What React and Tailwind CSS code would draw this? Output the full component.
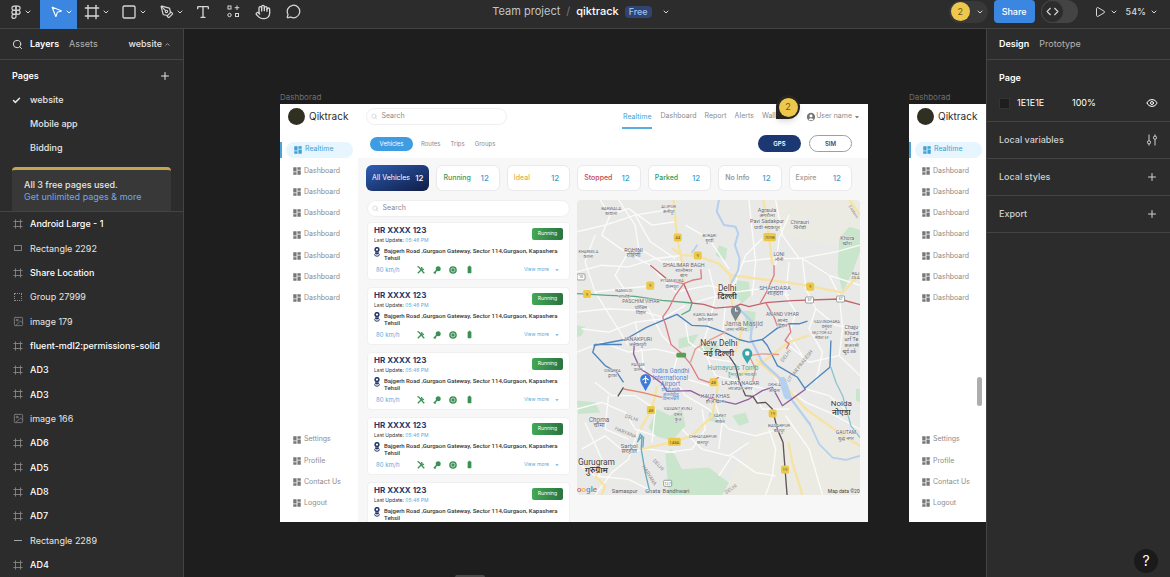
import {
  Check, ChevronDown, ChevronUp, Code, Eye, Figma, Frame, Hand, Image,
  MessageCircle, MousePointer2, PenTool, Play, Plus, Search, Square, Type,
} from 'lucide-react'
import { MdBatteryFull, MdDashboard, MdAccountCircle, MdArrowDropDown } from 'react-icons/md'

const PAGES = ['website', 'Mobile app', 'Bidding']

const LAYERS = [
  { type: 'frame', name: 'Android Large - 1' },
  { type: 'rect', name: 'Rectangle 2292' },
  { type: 'frame', name: 'Share Location' },
  { type: 'group', name: 'Group 27999' },
  { type: 'image', name: 'image 179' },
  { type: 'frame', name: 'fluent-mdl2:permissions-solid' },
  { type: 'frame', name: 'AD3' },
  { type: 'frame', name: 'AD3' },
  { type: 'image', name: 'image 166' },
  { type: 'frame', name: 'AD6' },
  { type: 'frame', name: 'AD5' },
  { type: 'frame', name: 'AD8' },
  { type: 'frame', name: 'AD7' },
  { type: 'line', name: 'Rectangle 2289' },
  { type: 'frame', name: 'AD4' },
]

const STATS = [
  { label: 'Running', color: 'text-[#3b9a5f]' },
  { label: 'Ideal', color: 'text-[#e0b04a]' },
  { label: 'Stopped', color: 'text-[#c0474e]' },
  { label: 'Parked', color: 'text-[#2f9a55]' },
  { label: 'No Info', color: 'text-[#8e8e8e]' },
  { label: 'Expire', color: 'text-[#9a9a9a]' },
]

const ROADS = [
  'M75 15L105 60L80 120L150 170L225 210L300 290', 'M6 110L90 90L180 60L300 40', 'M130 15L180 90L190 160L260 200L320 200',
  'M6 230L80 210L160 215L240 190L330 180', 'M60 120L30 200L60 290L110 370L160 450', 'M180 60L225 140L300 190',
  'M105 60L160 40L230 90L300 80', 'M160 170L120 240L160 300L220 340L260 420', 'M330 90L400 130L460 220',
  'M520 15L530 110L540 200L530 300', 'M600 15L620 120L670 190L780 170L852 150', 'M500 200L580 190L680 190L760 240L852 270',
  'M560 130L510 180L480 260L430 300L350 323', 'M640 60L610 130L600 210', 'M680 190L690 280L720 340L780 390L852 400',
  'M20 400L100 410L180 380L260 370L330 330', 'M6 470L80 440L160 470L240 460L330 480', 'M6 350L100 340L190 345L262 365',
  'M330 380L340 440L410 490L480 500', 'M260 420L310 470L290 540L330 600', 'M60 560L110 600L180 600L240 640L230 740',
  'M6 640L80 620L150 650L180 700L240 720', 'M20 760L90 720L150 770L220 760L300 770', 'M60 897L110 830L160 790L190 700',
  'M6 800L60 840L160 850L240 890', 'M330 600L400 640L460 700L540 720L610 700', 'M320 700L380 760L460 780L520 740',
  'M430 840L470 780L540 830L600 840', 'M380 640L390 700L350 760L270 770', 'M560 500L610 560L690 620L760 650L852 700',
  'M640 450L700 500L790 480L852 540', 'M690 580L760 600L820 650', 'M720 340L700 400L740 470L720 560',
  'M580 700L600 760L590 840L570 897', 'M630 660L700 760L740 897', 'M660 350L640 420L680 480', 'M400 392L380 450L420 540L500 560',
  'M300 290L400 270L480 290L560 280L640 300', 'M450 330L440 420L470 470', 'M520 560L560 640L640 640', 'M30 680L80 790L70 850',
  'M100 600L90 700L160 730', 'M400 220L420 300L400 390', 'M640 200L630 300L660 350', 'M300 540L400 570L480 560L570 580',
  'M410 600L440 680L430 760', 'M60 290L140 280L225 272', 'M180 380L200 470L210 560', 'M760 240L790 300L800 400L790 480',
]

const HIGHWAYS = [
  'M295 15L305 130L320 200L325 262', 'M290 160L320 180L366 182L430 205L465 240L640 262L705 273L800 292L852 235',
  'M563 15L580 125L590 210', 'M465 240L470 330L500 400L480 470', 'M245 572L230 640L195 700', 'M430 560L410 660L350 720L298 737L200 760',
  'M540 490L620 560L690 640L760 690L800 720L852 750', 'M638 740L650 800L680 897', 'M820 15L852 60', 'M60 840L90 870L80 897',
  'M700 420L640 440L560 500L490 540',
]

const PARKS = [
  'M790 130L820 95L852 105V170L830 230L800 290L785 230Z', 'M485 255L520 260L525 300L500 325L480 300Z',
  'M430 150L455 160L450 195L420 180Z', 'M310 430L370 415L350 450L310 460Z', 'M6 615L60 620L75 650L10 655Z',
  'M245 640L285 660L320 640L330 690L290 735L240 720L220 695Z', 'M270 770L290 760L320 820L400 815L460 860L440 897H280Z',
  'M470 660L510 650L520 680L490 690Z', 'M400 650L450 655L445 680L400 675Z', 'M505 345L540 350L535 400L515 410Z',
  'M6 390L30 395L20 420L6 425Z', 'M370 445L430 450L420 475L375 470Z', 'M840 580L852 580V620L840 615Z',
]

const LINES = [
  { color: '#5aa886', d: 'M6 295L100 300L180 303L260 315L350 323L343 345L318 358' },
  { color: '#4f86bd', d: 'M55 450L150 432L215 395L305 357L350 390L395 392L445 410L490 432L520 440L560 432L605 398L640 385L670 385L695 377' },
  { color: '#4f86bd', d: 'M140 447H60L53 470L90 510L125 530L145 560' },
  { color: '#4f86bd', d: 'M560 432L575 450L605 510L665 545L687 578L762 515L765 435' },
  { color: '#c4626b', d: 'M225 210L273 250M325 265L350 323L385 327L420 338L480 333L495 326L520 334L570 322L650 316L790 311L852 328' },
  { color: '#dc7d84', d: 'M595 210V240L570 295L553 325M570 322L595 365L605 392M640 385L645 410L628 435L640 445L632 460' },
  { color: '#dc7d84', d: 'M270 253L325 265L350 255L378 250L376 222M325 265L300 300L280 340L262 365L270 385L287 447L320 475L345 505L370 550L400 560L430 545' },
  { color: '#e39a8c', d: 'M345 500L360 460L400 435L450 410M530 560L540 520L520 480L560 475L610 477' },
  { color: '#e2896a', d: 'M145 580L200 590L260 605' },
  { color: '#95609f', d: 'M178 440L175 475L195 520L235 545L262 565L275 587L345 585L375 600L420 612L480 625L520 610L560 585L590 575L620 630L655 605L690 580' },
  { color: '#5e5358', d: 'M145 575L128 602M460 480L480 510L492 560L510 600L532 602L545 622L570 620L590 640L605 700L622 740L628 820L634 897' },
  { color: '#64abc4', d: 'M222 880L210 830L198 760L200 720L187 738L195 715L205 725L203 755' },
  { color: '#8cc4cf', d: 'M765 515L780 560L800 600L825 690L852 725' },
]

const PLACES = [
  { x: 108, y: 44, size: 13, name: 'BARWALA', hi: 'बरवाला' },
  { x: 280, y: 38, size: 13, name: 'ALIPUR', hi: 'अलीपुर' },
  { x: 574, y: 50, size: 16, name: 'Agraula', hi: 'अगरौला' },
  { x: 574, y: 85, size: 16, name: 'Pavi Sadakpur', hi: 'पावी सदकपुर' },
  { x: 672, y: 87, size: 16, name: 'Chirauri', hi: 'चिरोड़ी' },
  { x: 402, y: 125, size: 12, name: 'BURARI', hi: 'बुराड़ी' },
  { x: 175, y: 170, size: 17, name: 'ROHINI', hi: 'रोहिणी' },
  { x: 40, y: 173, size: 12, name: 'KHARMILA', hi: 'कराला' },
  { x: 814, y: 134, size: 16, name: 'Khora', hi: 'खोरा' },
  { x: 610, y: 181, size: 15, name: 'LONI', hi: 'लोनी' },
  { x: 325, y: 214, size: 16, name: 'SHALIMAR BAGH', hi: 'शालीमार', hi2: 'बाग' },
  { x: 290, y: 261, size: 12, name: 'PITAM PURA', hi: 'पीतमपुरा' },
  { x: 598, y: 283, size: 18, name: 'SHAHDARA', hi: 'शाहदरा' },
  { x: 146, y: 291, size: 12, name: 'NANGLOI', hi: 'नांगलोई' },
  { x: 197, y: 324, size: 15, name: 'PASCHIM VIHAR', hi: 'पश्चिम', hi2: 'विहार' },
  { x: 390, y: 362, size: 12, name: 'KAROL BAGH', hi: 'करोल बाग' },
  { x: 620, y: 363, size: 15, name: 'ANAND VIHAR', hi: 'आनंद', hi2: 'विहार' },
  { x: 753, y: 382, size: 12, name: 'VASUNDHARA', hi: 'वसुंधरा' },
  { x: 738, y: 415, size: 12, name: 'SECTOR 62', hi: 'सेक्टर ६२' },
  { x: 187, y: 437, size: 16, name: 'JANAKPURI', hi: 'जनकपुरी' },
  { x: 188, y: 510, size: 12, name: 'PALAM', hi: 'पालम' },
  { x: 112, y: 528, size: 12, name: 'DWARKA', hi: 'द्वारका' },
  { x: 494, y: 568, size: 16, name: 'LAJPAT NAGAR', hi: 'लाजपत नगर' },
  { x: 596, y: 572, size: 12, name: 'OKHLA', hi: 'ओखला' },
  { x: 419, y: 607, size: 16, name: 'HAUZ KHAS', hi: 'हौज़ खास' },
  { x: 308, y: 644, size: 13, name: 'VASANT KUNJ', hi: 'वसंत', hi2: 'कुंज' },
  { x: 433, y: 665, size: 13, name: 'SAKET', hi: 'साकेत' },
  { x: 610, y: 694, size: 13, name: 'BADARPUR', hi: 'बदरपुर' },
  { x: 72, y: 678, size: 19, name: 'Choma', hi: 'चौमा' },
  { x: 382, y: 727, size: 13, name: 'CHHATARPUR', hi: 'छतरपुर' },
  { x: 162, y: 756, size: 18, name: 'Sarhol', hi: 'सरहौल' },
  { x: 810, y: 716, size: 15, name: 'GAUTAM', hi: 'बुद्ध नगर' },
]

const CITIES = [
  { x: 455, y: 287, size: 25, name: 'Delhi', hi: 'दिल्ली', hiY: 312 },
  { x: 430, y: 453, size: 25, name: 'New Delhi', hi: 'नई दिल्ली', hiY: 480 },
  { x: 796, y: 632, size: 24, name: 'Noida', hi: 'नोएडा', hiY: 658 },
  { x: 64, y: 806, size: 25, name: 'Gurugram', hi: 'गुरुग्राम', hiY: 832 },
]

const SHIELDS = [
  { x: 307, y: 127, n: '44' }, { x: 582, y: 126, n: '709B' }, { x: 367, y: 181, n: '9' }, { x: 225, y: 271, n: '9' },
  { x: 36, y: 296, n: '9' }, { x: 703, y: 274, n: '9' }, { x: 414, y: 560, n: '48' }, { x: 227, y: 643, n: '48' },
  { x: 297, y: 738, n: '148A' }, { x: 591, y: 653, n: '19' }, { x: 628, y: 821, n: '19' },
]

function DelhiMap() {
  return (
    <svg viewBox="6 15 846 882" className="block w-full rounded" role="img" aria-label="Map of Delhi" fontFamily="Roboto, 'Noto Sans', sans-serif">
      <rect x="6" y="15" width="846" height="882" fill="#e9e9e8" />
      <path d="M330 15H560L600 120L852 160V15Z M640 600L852 760V897H440L520 740Z" fill="#ecebe3" />
      {PARKS.map((d) => <path key={d} d={d} fill="#c9e5cb" />)}
      <g fill="none" stroke="#fbfbfb" strokeWidth="4" strokeLinejoin="round">
        {ROADS.map((d) => <path key={d} d={d} />)}
      </g>
      <g fill="none" stroke="#f6e3a4" strokeWidth="7" strokeLinejoin="round">
        {HIGHWAYS.map((d) => <path key={d} d={d} />)}
      </g>
      <g fill="none" stroke="#b5cfee" strokeLinejoin="round" strokeLinecap="round">
        <path strokeWidth="6" d="M430 15L424 50L445 90L480 95L488 115L478 150L492 190L488 225L468 262" />
        <path strokeWidth="5" d="M365 150L350 172M700 680L730 745L770 785L810 792L852 780" />
        <path strokeWidth="7" d="M495 345L530 380L525 430L560 500L610 545L650 615L702 685" />
        <path strokeWidth="22" d="M620 555L635 600" />
      </g>
      <g fill="none" strokeWidth="4" strokeLinejoin="round">
        {LINES.map((l) => <path key={l.d} d={l.d} stroke={l.color} />)}
      </g>

      {SHIELDS.map((s) => (
        <g key={`${s.x}-${s.y}`}>
          <rect x={s.x - (s.n.length > 2 ? 19 : 12)} y={s.y - 12} width={s.n.length > 2 ? 38 : 24} height="24" rx="5" fill="#ecc94b" />
          <text x={s.x} y={s.y + 5} fontSize="13" textAnchor="middle" fill="#6c5a1e">{s.n}</text>
        </g>
      ))}
      {[[701, 314, '57'], [794, 311, '57'], [18, 245, '10'], [277, 862, '127']].map(([x, y, n]) => (
        <g key={`${x}`}>
          <rect x={x - 12} y={y - 9} width="24" height="18" rx="3" fill="#fff" stroke="#777" strokeWidth="2" />
          <text x={x} y={y + 4} fontSize="11" textAnchor="middle" fill="#555">{n}</text>
        </g>
      ))}

      <g textAnchor="middle" fill="#62656d" stroke="#f2f2f2" strokeWidth="2" paintOrder="stroke">
        {PLACES.map((p) => (
          <g key={p.name} fontSize={p.size}>
            <text x={p.x} y={p.y}>{p.name}</text>
            <text x={p.x} y={p.y + 16}>{p.hi}</text>
            {p.hi2 && <text x={p.x} y={p.y + 31}>{p.hi2}</text>}
          </g>
        ))}
      </g>
      <g textAnchor="middle" fill="#3d3f44" stroke="#f2f2f2" strokeWidth="2" paintOrder="stroke">
        {CITIES.map((c) => (
          <g key={c.name} fontSize={c.size}>
            <text x={c.x} y={c.y}>{c.name}</text>
            <text x={c.x} y={c.hiY} fontWeight="600">{c.hi}</text>
          </g>
        ))}
      </g>

      <g fontSize="15" fill="#8f8f8f">
        <text transform="translate(148 665) rotate(18)">DELHI</text>
        <text transform="translate(118 702) rotate(22)">HARYANA</text>
        <text transform="translate(232 795) rotate(48)">DELHI</text>
        <text transform="translate(200 812) rotate(58)">HARYANA</text>
        <text transform="translate(622 500) rotate(-55)">DELHI</text>
        <text transform="translate(640 560) rotate(-52)">UTTAR PRADESH</text>
        <text transform="translate(452 895) rotate(-35)">DELHI</text>
        <text transform="translate(818 34) rotate(58)" fontSize="13">Eastern</text>
      </g>

      <g fontSize="20" fill="#7e8186">
        <text x="504" y="392" textAnchor="middle">Jama Masjid</text>
        <text x="482" y="407" fontSize="14" textAnchor="middle">जामा मस्जिद</text>
      </g>
      <path d="M480 378C472 360 466 356 466 346A15 15 0 0 1 496 346C496 356 488 360 480 378Z" fill="#7b8790" />
      <path d="M480 338V347H487" fill="none" stroke="#fff" strokeWidth="3" />
      <g fill="#4fa9a5" textAnchor="middle">
        <text x="472" y="524" fontSize="20">Humayun's Tomb</text>
        <text x="500" y="541" fontSize="14">हुमायूं का मकबरा</text>
      </g>
      <path d="M515 505C505 487 500 483 500 474A15 15 0 0 1 530 474C530 483 525 487 515 505Z" fill="#36a6a8" />
      <rect x="509" y="467" width="12" height="13" rx="3" fill="#fff" />
      <g fill="#5b86cf" fontSize="19" textAnchor="middle">
        <text x="286" y="533">Indira Gandhi</text>
        <text x="285" y="552">International</text>
        <text x="285" y="571">Airport</text>
        <g fontSize="14">
          <text x="286" y="586">इंदिरा गांधी</text>
          <text x="286" y="600">अंतर्राष्ट्रीय</text>
          <text x="286" y="614">विमानक्षेत्र</text>
        </g>
      </g>
      <path d="M211 586C201 568 195 562 195 551A16 16 0 0 1 227 551C227 562 221 568 211 586Z" fill="#3e7bd8" />
      <path d="M211 541V561M202 553L211 547L220 553M207 561H215" fill="none" stroke="#fff" strokeWidth="3" />
      <rect x="303" y="472" width="29" height="14" rx="4" fill="#5aa052" />

      <g fontSize="17" fill="#5e6168">
        <text x="110" y="891">Samaspur</text>
        <text x="210" y="891">Ghata</text>
        <text x="262" y="891">Bandhwari</text>
        <text x="828" y="238" fontSize="12">RAJ</text>
        <text x="826" y="252" fontSize="12">ZILA</text>
        <text x="806" y="400" fontSize="16">Chaju</text>
        <text x="806" y="418" fontSize="16">Khurd</text>
        <text x="806" y="436" fontSize="16">urf Te</text>
        <text x="806" y="454" fontSize="14">छजारसी</text>
        <text x="800" y="472" fontSize="14">खुर्द उर्फ</text>
      </g>
      <text x="6" y="889" fontSize="24" fontWeight="500">
        <tspan fill="#e06055">o</tspan><tspan fill="#e5b93a">o</tspan><tspan fill="#5a8ee0">g</tspan><tspan fill="#4fa662">l</tspan><tspan fill="#e06055">e</tspan>
      </text>
      <text x="756" y="891" fontSize="15" fill="#444">Map data ©20</text>
    </svg>
  )
}

function LayerIcon({ type }) {
  if (type === 'frame') return <Frame size={10} strokeWidth={2} className="text-[#8b8b8b]" />
  if (type === 'image') return <Image size={11} strokeWidth={2} className="text-[#7d7d7d]" />
  if (type === 'rect') return <span className="h-1.5 w-2 border border-[#7d7d7d]" />
  if (type === 'group') return <span className="h-2 w-2 border border-dotted border-[#8b8b8b]" />
  return <span className="h-px w-2 bg-[#a5a5a5]" />
}

function Tool({ label, active, menu, children }) {
  return (
    <button
      type="button"
      aria-label={label}
      className={`flex items-center gap-0.5 pb-1.5 ${menu ? 'w-[37px] justify-end pr-1' : 'w-[30px] justify-center'} ${active ? 'bg-[#3b86e0] text-white' : ''}`}
    >
      {children}
      {menu && <ChevronDown size={8} strokeWidth={3} />}
    </button>
  )
}

function Toolbar() {
  return (
    <header className="grid h-[29px] shrink-0 grid-cols-[1fr_auto_1fr] border-b border-[#444] bg-[#2c2c2c] text-[#d6d6d6]">
      <div className="flex">
        <button type="button" aria-label="Main menu" className="flex w-10 items-center justify-end gap-px pr-2 pb-1.5">
          <Figma size={14} />
          <ChevronDown size={8} strokeWidth={3} />
        </button>
        <Tool label="Move" active menu>
          <MousePointer2 size={13} strokeWidth={2} />
        </Tool>
        <Tool label="Frame" menu><Frame size={16} strokeWidth={2} /></Tool>
        <Tool label="Shape" menu><Square size={16} strokeWidth={2} /></Tool>
        <Tool label="Pen" menu><PenTool size={14} strokeWidth={2} /></Tool>
        <Tool label="Text"><Type size={16} strokeWidth={2} /></Tool>
        <Tool label="Resources">
          <svg width="13" height="13" viewBox="0 0 13 13" fill="none" stroke="currentColor">
            <rect x="1" y="1" width="3" height="3" />
            <path d="M10 0.5V5M7.7 2.7H12.3" />
            <circle cx="2.5" cy="10" r="1.7" />
            <rect x="8.5" y="8.5" width="3" height="3" />
          </svg>
        </Tool>
        <Tool label="Hand"><Hand size={16} strokeWidth={2} /></Tool>
        <Tool label="Comment"><MessageCircle size={15} strokeWidth={2} /></Tool>
      </div>

      <div className="mr-2 flex items-center gap-1.5 pb-1.5 text-[11px]">
        <span className="text-[#c4c4c4]">Team project</span>
        <span className="text-[#777]">/</span>
        <span className="font-medium text-white">qiktrack</span>
        <span className="rounded-sm bg-[#2f4470] px-1 text-[9px] leading-3 font-medium text-[#9cc0f5]">Free</span>
        <button type="button" aria-label="File menu" className="ml-1"><ChevronDown size={8} strokeWidth={3} /></button>
      </div>

      <div className="flex items-center justify-end pr-3 pb-1.5">
        <button type="button" aria-label="Collaborators" className="flex h-[22px] items-center gap-1.5 rounded-full bg-[#383838] pr-1 pl-0.5">
          <span className="flex size-[19px] items-center justify-center rounded-full bg-[#eec84d] text-[9px] text-[#6b5413]">2</span>
          <ChevronDown size={8} strokeWidth={3} />
        </button>
        <button type="button" className="ml-1.5 h-[23px] rounded bg-[#3b86e0] px-2 font-medium text-white">Share</button>
        <button type="button" aria-label="Dev mode" className="ml-1.5 flex h-[23px] w-[37px] items-center rounded-full bg-[#444]">
          <span className="flex size-[23px] items-center justify-center rounded-full border border-[#444] bg-[#2c2c2c]"><Code size={13} strokeWidth={2} /></span>
        </button>
        <button type="button" aria-label="Present" className="ml-4 flex items-center gap-1">
          <Play size={12} strokeWidth={2} />
          <ChevronDown size={8} strokeWidth={3} />
        </button>
        <button type="button" className="ml-2 flex items-center gap-1 font-medium">
          54% <ChevronDown size={8} strokeWidth={3} />
        </button>
      </div>
    </header>
  )
}

function LeftPanel() {
  return (
    <aside className="flex w-[184px] shrink-0 flex-col border-r border-[#444] bg-[#2c2c2c] text-[#e6e6e6]">
      <div className="flex h-[31px] shrink-0 items-center border-b border-[#444] px-3">
        <Search size={11} strokeWidth={2} />
        <button type="button" className="ml-[7px] font-semibold text-white">Layers</button>
        <button type="button" className="ml-2.5 text-[#b3b3b3]">Assets</button>
        <button type="button" className="ml-auto flex items-center gap-0.5 font-medium">
          website <ChevronUp size={7} />
        </button>
      </div>

      <div className="shrink-0 border-b border-[#444]">
        <div className="flex h-7 items-center justify-between px-3 pt-1">
          <h2 className="font-semibold text-white">Pages</h2>
          <button type="button" aria-label="Add page"><Plus size={12} strokeWidth={2} /></button>
        </div>
        <ul>
          {PAGES.map((p, i) => (
            <li key={p} className="flex h-6 items-center pl-3 font-medium">
              <span className="w-[18px]">{i === 0 && <Check size={9} strokeWidth={4} />}</span>
              {p}
            </li>
          ))}
        </ul>
        <div className="mx-3 mt-[7px] rounded-t-sm border-t-[3px] border-[#c9a44f] bg-[#383838] px-3 pt-[9px] pb-2 leading-3">
          <p className="font-medium">All 3 free pages used.</p>
          <a href="#plans" className="text-[#6fa8e4]">Get unlimited pages &amp; more</a>
        </div>
      </div>

      {/* layer tree */}
      <ul className="flex flex-1 flex-col">
        {LAYERS.map((l, i) => (
          <li key={i} className={`flex min-h-6 flex-1 items-center pl-3 ${l.type === 'frame' ? 'font-medium text-white' : ''}`}>
            <span className="mr-1.5 flex w-3 justify-center"><LayerIcon type={l.type} /></span>
            {l.name}
          </li>
        ))}
      </ul>
    </aside>
  )
}

function RightPanel() {
  return (
    <aside className="flex w-[184px] shrink-0 flex-col border-l border-[#444] bg-[#2c2c2c] text-[#d0d0d0]">
      <div className="flex h-[31px] items-center gap-2.5 border-b border-[#444] px-3">
        <button type="button" className="font-semibold text-white">Design</button>
        <button type="button" className="text-[#b3b3b3]">Prototype</button>
      </div>
      <section className="border-b border-[#444] px-3 pt-3 pb-[11px]">
        <h2 className="leading-3 font-semibold text-white">Page</h2>
        <div className="mt-3 flex h-3.5 items-center text-white">
          <span className="size-[11px] border border-[#333] bg-[#1e1e1e]" />
          <span className="ml-[7px] w-[55px]">1E1E1E</span>
          <span>100%</span>
          <button type="button" aria-label="Toggle visibility" className="ml-auto"><Eye size={12} strokeWidth={2} /></button>
        </div>
      </section>
      <section className="flex h-[37px] items-center justify-between border-b border-[#444] px-3 font-medium">
        <h2>Local variables</h2>
        <button type="button" aria-label="Open variables">
          <svg width="12" height="12" viewBox="0 0 12 12" fill="none" stroke="currentColor">
            <path d="M3 0.5V6.5M3 10V11.5M9 11.5V5.5M9 2V0.5" />
            <circle cx="3" cy="8.3" r="1.6" />
            <circle cx="9" cy="3.7" r="1.6" />
          </svg>
        </button>
      </section>
      {['Local styles', 'Export'].map((s) => (
        <section key={s} className="flex h-[37px] items-center justify-between border-b border-[#444] px-3 font-medium">
          <h2>{s}</h2>
          <button type="button" aria-label={`Add ${s}`}><Plus size={12} strokeWidth={2} /></button>
        </section>
      ))}
      <button type="button" aria-label="Help" className="mt-auto mr-3 mb-1 flex size-6 items-center justify-center self-end rounded-full bg-[#1a1a1a] text-sm text-white">?</button>
    </aside>
  )
}

function SideNav() {
  return (
    <nav className="flex w-[78px] shrink-0 flex-col bg-white pb-2 text-[7px] text-[#8c8c8c]">
      <div className="flex h-[25px] items-center gap-1 pl-2 text-[10px] text-[#2b2b2b]">
        <span className="size-[17px] rounded-full bg-[#2f2f22]" />
        Qiktrack
      </div>
      <ul className="mt-2.5 flex h-[170px] flex-col">
        <li className="flex flex-1 items-center text-[#3f9fd8]">
          <span className="h-4 w-0.5 bg-[#4ba3dc]" />
          <a href="#realtime" className="ml-1 flex h-4 w-[67px] items-center gap-0.5 rounded-full bg-[#e6f5fe] pl-[7px]">
            <MdDashboard size={10} /> Realtime
          </a>
        </li>
        {Array.from({ length: 7 }, (_, i) => (
          <li key={i} className="flex flex-1 items-center pl-3">
            <a href="#dashboard" className="flex items-center gap-0.5"><MdDashboard size={10} className="text-[#777]" /> Dashboard</a>
          </li>
        ))}
      </ul>
      <ul className="mt-auto flex h-[85px] flex-col">
        {['Settings', 'Profile', 'Contact Us', 'Logout'].map((s) => (
          <li key={s} className="flex flex-1 items-center pl-3">
            <a href="#more" className="flex items-center gap-0.5"><MdDashboard size={10} className="text-[#777]" /> {s}</a>
          </li>
        ))}
      </ul>
    </nav>
  )
}

function SearchBox({ id, className }) {
  return (
    <label htmlFor={id} className={`flex h-[17px] items-center gap-1 rounded-full border border-[#efefef] bg-white px-1 ${className}`}>
      <Search size={7} className="text-[#c4c4c4]" />
      <input id={id} type="search" placeholder="Search" aria-label="Search" className="w-full min-w-0 bg-transparent text-[7px] outline-none placeholder:text-[#8a8a8a]" />
    </label>
  )
}

function VehicleCard() {
  return (
    <article className="h-[58px] shrink-0 rounded border border-[#f0f0f0] bg-white px-1.5 pt-0.5 text-[#333]">
      <div className="flex items-start justify-between">
        <div>
          <h3 className="text-[8px] leading-[10px] font-bold text-[#24376b]">HR XXXX 123</h3>
          <p className="text-[5px] leading-[10px]">Last Update: <span className="text-[#58ace0]">05:46 PM</span></p>
        </div>
        <span className="mt-[3px] flex h-3 w-[31px] items-center justify-center rounded-xs bg-linear-to-r from-[#43a857] to-[#2a7440] text-[5px] text-white">Running</span>
      </div>
      <div className="mt-0.5 flex gap-1">
        <svg width="6" height="10" viewBox="0 0 6 10" className="shrink-0" fill="none" stroke="#24376b">
          <circle cx="3" cy="2.6" r="1.9" strokeWidth="1.5" />
          <path d="M1.6 5.2L3 7L4.4 5.2" strokeWidth="1.2" />
          <ellipse cx="3" cy="7.7" rx="2.3" ry="1.5" />
        </svg>
        <p className="font-[Roboto,sans-serif] text-[6px] leading-[7px] font-medium">Bajgerh Road ,Gurgaon Gateway, Sector 114,Gurgaon, Kapashera Tehsil</p>
      </div>
      <div className="mt-1 flex items-center text-[#3a9154]">
        <span className="w-[43px] pl-0.5 text-[6px] leading-2 text-[#58ace0]">80 km/h</span>
        <span className="flex items-center gap-2">
          <svg width="8" height="8" viewBox="0 0 8 8" fill="none" stroke="currentColor">
            <path d="M0.5 0.5L2 1.2L6 5.5M5 5L7.3 7.3" strokeWidth="1.3" />
            <path d="M0.8 7.2L4.8 3.3M4.7 1C4.4 2.6 5.4 3.6 7 3.3" strokeWidth="1.3" />
          </svg>
          <svg width="8" height="8" viewBox="0 0 8 8">
            <circle cx="5.2" cy="2.8" r="2.5" fill="currentColor" />
            <path d="M4 4L0.8 7.2M1.5 6.2L2.8 7.4" stroke="currentColor" strokeWidth="1.5" />
          </svg>
          <svg width="8" height="8" viewBox="0 0 8 8">
            <circle cx="4" cy="4" r="3.8" fill="currentColor" />
            <circle cx="4" cy="4" r="2" fill="none" stroke="#fff" strokeWidth="0.6" />
          </svg>
          <MdBatteryFull size={9} />
        </span>
        <button type="button" className="mr-0.5 ml-auto flex items-center gap-1 text-[5px] text-[#58ace0]">
          View more <MdArrowDropDown size={8} />
        </button>
      </div>
    </article>
  )
}

function DashboardHeader() {
  return (
    <header className="bg-white text-[7px] text-[#8c8c8c]">
      <div className="flex h-[25px] items-center pr-1.5 pl-2">
        <SearchBox id="search-top" className="w-[141px]" />
        <nav className="ml-auto flex items-center gap-2">
          <a href="#realtime" className="border-b-2 border-[#5aaede] px-px pt-2 pb-[6px] leading-2 text-[#3f9fd8]">Realtime</a>
          <a href="#dashboard">Dashboard</a>
          <a href="#report">Report</a>
          <a href="#alerts">Alerts</a>
          <a href="#wallet">Wallet</a>
        </nav>
        <button type="button" className="ml-6 flex items-center">
          <MdAccountCircle size={10} className="text-[#777]" />
          <span>User name</span>
          <MdArrowDropDown size={10} className="text-[#666]" />
        </button>
      </div>
      <div className="flex h-[29px] items-center pr-4 pl-3 text-[6px]">
        <div className="flex items-center gap-2">
          <button type="button" className="h-3.5 w-[43px] rounded-full bg-[#3d9ce2] text-white">Vehicles</button>
          <button type="button">Routes</button>
          <button type="button" className="ml-0.5">Trips</button>
          <button type="button" className="ml-0.5">Groups</button>
        </div>
        <div className="ml-auto flex gap-2 font-semibold">
          <button type="button" className="h-[17px] w-[43px] rounded-full bg-[#1c3873] text-white">GPS</button>
          <button type="button" className="h-[17px] w-[43px] rounded-full border border-[#9aa0aa] text-[#3c4a70]">SIM</button>
        </div>
      </div>
    </header>
  )
}

function Dashboard() {
  return (
    <div className="flex h-[418px] w-[588px] overflow-hidden bg-[#f7f7f8]">
      <SideNav />
      <div className="min-w-0 flex-1">
        <DashboardHeader />
        <div className="mt-[7px] mr-4 ml-2 grid grid-cols-7 gap-[7px] text-[7px] font-medium">
          <div className="flex h-[26px] items-center justify-between rounded-md bg-linear-to-br from-[#2f5fb8] to-[#0f1d45] px-1.5 whitespace-nowrap text-white">
            <span className="font-normal">All Vehicles</span> <span className="text-[8px]">12</span>
          </div>
          {STATS.map((s) => (
            <div key={s.label} className="flex h-[26px] items-center justify-between rounded-md border border-[#e9e9ec] bg-white pr-2.5 pl-1.5">
              <span className={`whitespace-nowrap ${s.color}`}>{s.label}</span>
              <span className="text-[8px] text-[#3f9fd0]">12</span>
            </div>
          ))}
        </div>
        <div className="mt-[9px] mr-2 ml-[9px] flex items-start gap-[7px]">
          <div className="flex w-[203px] shrink-0 flex-col gap-[7px]">
            <SearchBox id="search-list" className="-mb-0.5" />
            {[1, 2, 3, 4, 5].map((n) => <VehicleCard key={n} />)}
          </div>
          <div className="min-w-0 flex-1"><DelhiMap /></div>
        </div>
      </div>
    </div>
  )
}

function Canvas() {
  return (
    <main className="relative min-w-0 flex-1 overflow-hidden bg-[#1e1e1e] text-[8px] text-[#6f6f6f]">
      <div className="absolute top-[62px] left-24">
        <p className="leading-[13px]">Dashborad</p>
        <Dashboard />
      </div>
      <div className="absolute top-[62px] left-[725px]">
        <p className="leading-[13px]">Dashborad</p>
        <div className="flex h-[418px]"><SideNav /></div>
      </div>

      {/* comment pin */}
      <button type="button" aria-label="Open comments" className="absolute top-[66px] left-[592px] flex size-6 items-center justify-center rounded-full rounded-bl-none bg-[#26251f] shadow-md">
        <span className="flex size-[19px] items-center justify-center rounded-full bg-[#eec84d] text-[9px] text-[#6b5413]">2</span>
      </button>

      {/* scroll thumbs */}
      <span className="absolute top-[348px] right-1 h-[29px] w-[5px] rounded-full bg-[#adadad]" />
      <span className="absolute bottom-0 left-[271px] h-0.5 w-[30px] rounded-t bg-[#4a4a4a]" />
    </main>
  )
}

export default function App() {
  return (
    <div className="flex min-h-screen flex-col bg-[#1e1e1e] font-[Inter,sans-serif] text-[9px]">
      <Toolbar />
      <div className="flex flex-1">
        <LeftPanel />
        <Canvas />
        <RightPanel />
      </div>
    </div>
  )
}
